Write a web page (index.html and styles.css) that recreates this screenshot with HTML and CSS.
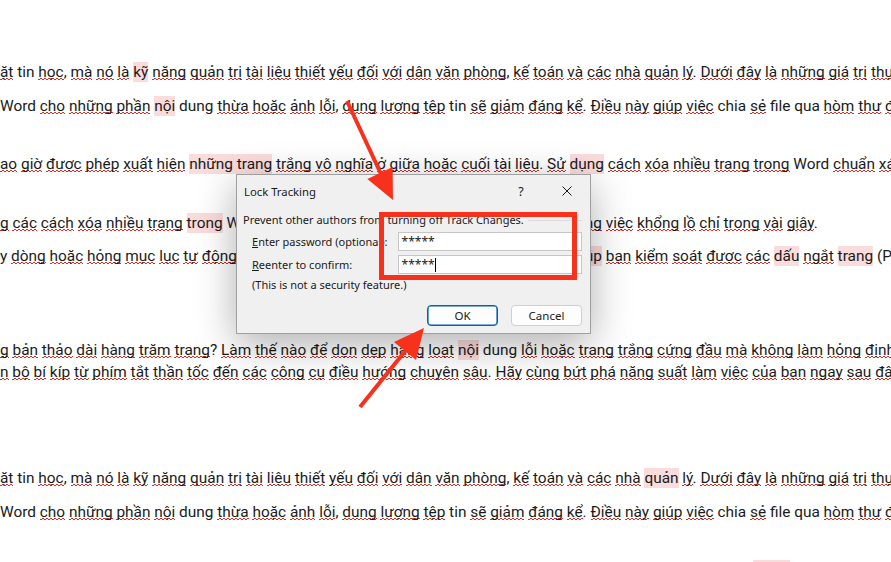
FILE: index.html
```html
<!DOCTYPE html>
<html lang="vi">
<head>
<meta charset="utf-8">
<title>Lock Tracking</title>
<link rel="stylesheet" href="styles.css">
</head>
<body>
<div class="doc">
  <div class="para p1">
    <div class="ln"><u>ặt</u> tin <u>học</u>, <u>mà</u> <u>nó</u> <u>là</u> <mark class="hl">kỹ</mark> <u>năng</u> <u>quản</u> <u>trị</u> <u>tài</u> <u>liệu</u> <u>thiết</u> <u>yếu</u> <u>đối</u> <u>với</u> <u>dân</u> <u>văn</u> <u>phòng</u>, <u>kế</u> <u>toán</u> <u>và</u> <u>các</u> <u>nhà</u> <u>quản</u> <u>lý</u>. <u>Dưới</u> <u>đây</u> <u>là</u> <u>những</u> <u>giá</u> <u>trị</u> <u>thực</u> <u>tiễn</u></div>
    <div class="ln">Word <u>cho</u> <u>những</u> <u>phần</u> <mark class="hl">nội</mark> dung <u>thừa</u> <u>hoặc</u> <u>ảnh</u> <u>lỗi</u>, <u>dung</u> <u>lượng</u> <u>tệp</u> tin <u>sẽ</u> <u>giảm</u> <u>đáng</u> <u>kể</u>. <u>Điều</u> <u>này</u> <u>giúp</u> <u>việc</u> chia <u>sẻ</u> file qua <u>hòm</u> <u>thư</u> <u>điện</u> <u>tử</u></div>
  </div>
  <div class="para p2">
    <div class="ln"><u>ao</u> <u>giờ</u> <u>được</u> <u>phép</u> <u>xuất</u> <u>hiện</u> <mark class="hl">những trang</mark> <u>trắng</u> <u>vô</u> <u>nghĩa</u> <u>ở</u> <u>giữa</u> <u>hoặc</u> <u>cuối</u> <u>tài</u> <u>liệu</u>. <u>Sử</u> <mark class="hl">dụng</mark> <u>cách</u> <u>xóa</u> <u>nhiều</u> <u>trang</u> <u>trong</u> Word <u>chuẩn</u> <u>xác</u> <u>nhất</u></div>
  </div>
  <div class="para p3">
    <div class="ln"><u>g</u> <u>các</u> <u>cách</u> <u>xóa</u> <u>nhiều</u> <u>trang</u> <mark class="hl">trong</mark> Word <u>chuẩn</u> <u>xác</u> <u>sẽ</u> <u>giúp</u> <u>bạn</u> <u>giải</u> <u>quyết</u> <u>khối</u> <u>lượng</u> <u>công</u> <u>việc</u> <u>khổng</u> <u>lồ</u> <u>chỉ</u> <u>trong</u> <u>vài</u> <u>giây</u>.</div>
    <div class="ln">y <u>dòng</u> <u>hoặc</u> <u>hỏng</u> <u>mục</u> <u>lục</u> <u>tự</u> <u>động</u> <u>của</u> <u>văn</u> <u>bản</u>. <u>Việc</u> <u>bật</u> <u>chế</u> <u>độ</u> <u>hiển</u> <u>thị</u> <u>ký</u> <u>tự</u> <u>ẩn</u> <u>sẽ</u> <mark class="hl">giúp</mark> <u>bạn</u> <u>kiểm</u> <u>soát</u> <u>được</u> <u>các</u> <mark class="hl">dấu</mark> <u>ngắt</u> <mark class="hl">trang</mark> (Page Break)</div>
  </div>
  <div class="para p4">
    <div class="ln"><u>g</u> <u>bản</u> <u>thảo</u> <u>dài</u> <u>hàng</u> <u>trăm</u> <u>trang</u>? <u>Làm</u> <u>thế</u> <u>nào</u> <u>để</u> <u>dọn</u> <u>dẹp</u> <u>hàng</u> <u>loạt</u> <mark class="hl">nội</mark> dung <u>lỗi</u> <u>hoặc</u> <u>trang</u> <u>trắng</u> <u>cứng</u> <u>đầu</u> <u>mà</u> <u>không</u> <u>làm</u> <u>hỏng</u> <u>định</u> <u>dạng</u></div>
    <div class="ln"><u>n</u> <u>bộ</u> <u>bí</u> <u>kíp</u> <u>từ</u> <u>phím</u> <u>tắt</u> <u>thần</u> <u>tốc</u> <u>đến</u> <u>các</u> <u>công</u> <u>cụ</u> <u>điều</u> <u>hướng</u> <u>chuyên</u> <u>sâu</u>. <u>Hãy</u> <u>cùng</u> <u>bứt</u> <u>phá</u> <u>năng</u> <u>suất</u> <u>làm</u> <u>việc</u> <u>của</u> <u>bạn</u> <u>ngay</u> <u>sau</u> <u>đây</u>!</div>
  </div>
  <div class="para p5">
    <div class="ln"><u>ặt</u> tin <u>học</u>, <u>mà</u> <u>nó</u> <u>là</u> <u>kỹ</u> <u>năng</u> <u>quản</u> <u>trị</u> <u>tài</u> <u>liệu</u> <u>thiết</u> <u>yếu</u> <u>đối</u> <u>với</u> <u>dân</u> <u>văn</u> <u>phòng</u>, <u>kế</u> <u>toán</u> <u>và</u> <u>các</u> <u>nhà</u> <mark class="hl">quản</mark> <u>lý</u>. <u>Dưới</u> <u>đây</u> <u>là</u> <u>những</u> <u>giá</u> <u>trị</u> <u>thực</u> <u>tiễn</u></div>
    <div class="ln">Word <u>cho</u> <u>những</u> <u>phần</u> <u>nội</u> dung <u>thừa</u> <u>hoặc</u> <u>ảnh</u> <u>lỗi</u>, <u>dung</u> <u>lượng</u> <u>tệp</u> tin <u>sẽ</u> <u>giảm</u> <u>đáng</u> <u>kể</u>. <u>Điều</u> <u>này</u> <u>giúp</u> <u>việc</u> chia <u>sẻ</u> file qua <u>hòm</u> <u>thư</u> <u>điện</u> <u>tử</u></div>
  </div>
  <div class="para p6">
    <div class="ln"><u>ao</u> <u>giờ</u> <u>được</u> <u>phép</u> <u>xuất</u> <u>hiện</u> <u>những</u> <u>trang</u> <u>trắng</u> <u>vô</u> <u>nghĩa</u> <u>ở</u> <u>giữa</u> <u>hoặc</u> <u>cuối</u> <u>tài</u> <u>liệu</u>. <u>Sử</u> <u>dụng</u> <u>cách</u> <u>xóa</u> <u>nhiều</u> <u>trang</u> <mark class="hl">trong</mark> Word <u>chuẩn</u> <u>xác</u></div>
  </div>
</div>

<div class="dialog">
  <div class="titlebar">
    <div class="title">Lock Tracking</div>
    <div class="tbtn">?</div>
    <div class="tbtn">
      <svg width="10" height="10" viewBox="0 0 10 10"><path d="M0.5 0.5 L9.5 9.5 M9.5 0.5 L0.5 9.5" stroke="#1a1a1a" stroke-width="1" fill="none"/></svg>
    </div>
  </div>
  <div class="dbody">
    <div class="intro">Prevent other authors from turning off Track Changes.</div>
    <div class="field">
      <div class="flabel"><u>E</u>nter password (optional):</div>
      <div class="input">*****</div>
    </div>
    <div class="field">
      <div class="flabel"><u>R</u>eenter to confirm:</div>
      <div class="input">*****<span class="caret"></span></div>
    </div>
    <div class="note">(This is not a security feature.)</div>
    <div class="actions">
      <div class="btn primary">OK</div>
      <div class="btn">Cancel</div>
    </div>
  </div>
</div>

<svg class="annot" width="891" height="562" viewBox="0 0 891 562">
  <rect x="381.5" y="214.5" width="193" height="63" fill="none" stroke="#f7311b" stroke-width="5"/>
  <line x1="347" y1="101" x2="381" y2="174" stroke="#f7311b" stroke-width="4"/>
  <polygon points="393,200 392.6,167 367.4,179" fill="#f7311b"/>
  <line x1="360" y1="407" x2="406" y2="350" stroke="#f7311b" stroke-width="4"/>
  <polygon points="424,328 416,360 394,342" fill="#f7311b"/>
</svg>
</body>
</html>
```

FILE: styles.css
```css
* { box-sizing: border-box; }
html, body { margin: 0; padding: 0; }
body {
  width: 891px;
  height: 562px;
  overflow: hidden;
  position: relative;
  background: #ffffff;
  font-family: Roboto, "Noto Sans", sans-serif;
}

.doc {
  padding-top: 62px;
  color: #1a1a1a;
  font-size: 15.4px;
}
.para { display: flex; flex-direction: column; gap: 14px; }
.p2 { margin-top: 38px; }
.p3 { margin-top: 39px; gap: 13px; }
.p4 { margin-top: 74px; gap: 2px; }
.p5 { margin-top: 86px; gap: 14px; }
.p6 { margin-top: 38px; }

.ln {
  height: 20px;
  line-height: 20px;
  white-space: nowrap;
  overflow: hidden;
}
.doc u {
  text-decoration: none;
  background-image:
    repeating-linear-gradient(90deg, #e8261c 0 2px, transparent 2px 4px),
    repeating-linear-gradient(90deg, transparent 0 2px, #e8261c 2px 4px);
  background-size: 100% 1px, 100% 1px;
  background-position: 0 calc(100% - 1px), 0 calc(100% - 2px);
  background-repeat: no-repeat;
}
.hl {
  display: inline-block;
  height: 20px;
  background: #fbdcdc;
  color: inherit;
}

.dialog {
  position: absolute;
  left: 236px;
  top: 174px;
  width: 355px;
  height: 160px;
  background: #f0f0f0;
  border: 1px solid #a0a0a0;
  box-shadow: 0 10px 38px rgba(0, 0, 0, 0.32);
  font-family: "Noto Sans", sans-serif;
  font-size: 11px;
  color: #1a1a1a;
  display: flex;
  flex-direction: column;
}
.titlebar { height: 32px; display: flex; align-items: center; }
.title { flex: 1; padding-left: 7px; font-size: 11.3px; }
.tbtn {
  width: 46px;
  height: 32px;
  display: flex;
  align-items: center;
  justify-content: center;
  font-size: 12.5px;
}
.dbody {
  padding: 5px 8px 0 6px;
  display: flex;
  flex-direction: column;
}
.intro {
  display: flex;
  align-items: center;
  gap: 4px;
  line-height: 16px;
  white-space: nowrap;
}
.intro::after {
  content: "";
  flex: 1;
  height: 1px;
  background: #d9d9d9;
}
.field {
  display: flex;
  align-items: center;
  margin-top: 4px;
  padding-left: 9px;
}
.flabel { width: 146px; white-space: nowrap; }
.input {
  width: 185px;
  height: 19px;
  background: #ffffff;
  border: 1px solid #c6c6c6;
  padding-left: 3px;
  line-height: 17px;
  display: flex;
  align-items: center;
  font-size: 12px;
}
.caret {
  display: inline-block;
  width: 1px;
  height: 14px;
  background: #000000;
}
.note {
  padding-left: 9px;
  margin-top: 3px;
  line-height: 16px;
}
.actions {
  display: flex;
  justify-content: flex-end;
  gap: 13px;
  margin-top: 12px;
}
.btn {
  width: 71px;
  height: 21px;
  border-radius: 4px;
  background: #fdfdfd;
  border: 1px solid #d0d0d0;
  display: flex;
  align-items: center;
  justify-content: center;
  font-size: 11.5px;
}
.btn.primary {
  border-color: #0063b1;
  box-shadow: inset 0 0 0 0.6px #0063b1;
}

.annot {
  position: absolute;
  left: 0;
  top: 0;
  pointer-events: none;
}
```
